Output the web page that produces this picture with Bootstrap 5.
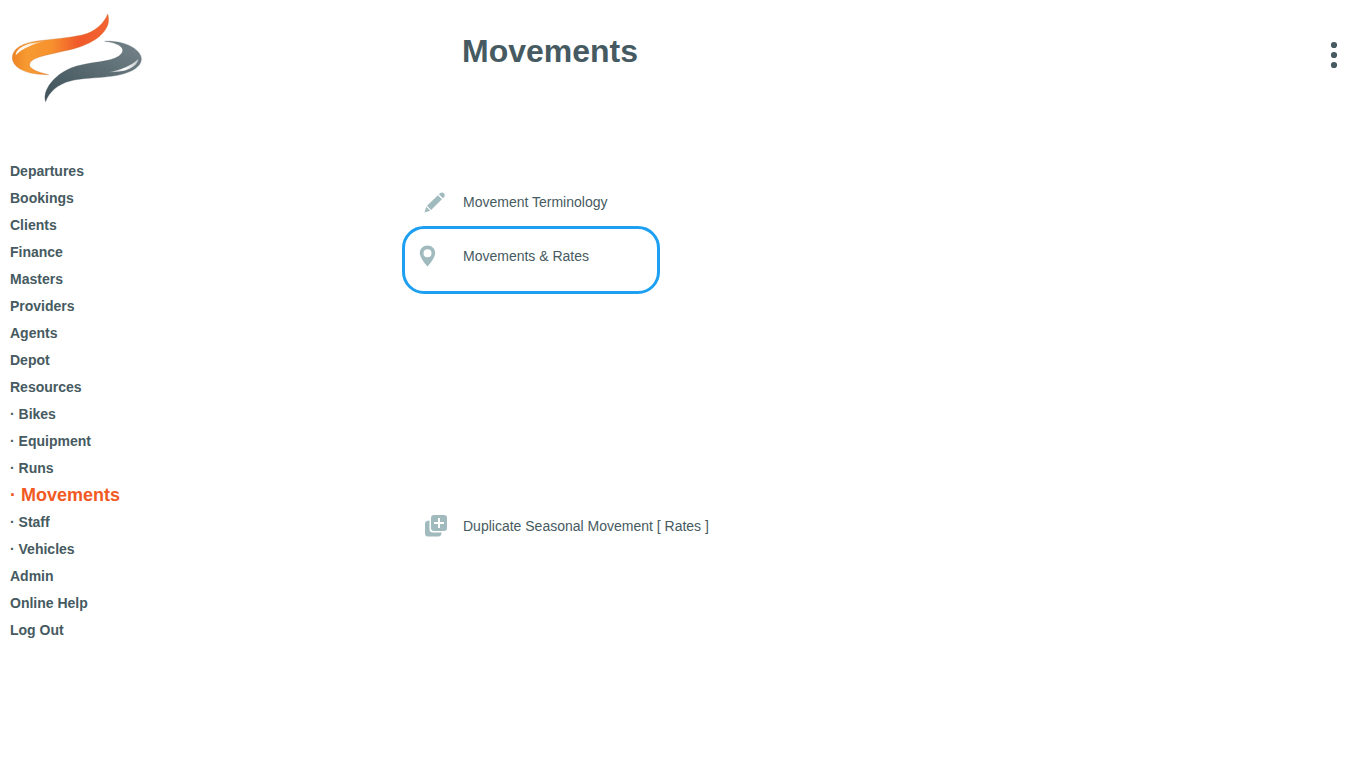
<!DOCTYPE html>
<html lang="en">
<head>
<meta charset="utf-8">
<meta name="viewport" content="width=device-width, initial-scale=1">
<title>Movements</title>
<link href="https://cdn.jsdelivr.net/npm/bootstrap@5.3.0/dist/css/bootstrap.min.css" rel="stylesheet">
<style>
  :root { --slate: #465a61; --accent: #f15a22; --icon: #a0babd; --focus: #1ea0f2; }
  body { font-family: "Liberation Sans", Arial, sans-serif; font-size: 14px; line-height: 27px; color: var(--slate); background: #fff; }
  a, .btn { color: var(--slate); text-decoration: none; }
  a:hover { color: var(--accent); }
  .split { display: grid; grid-template-columns: minmax(150px, 402px) 1fr; }
  .masthead { height: 158px; }
  .brand { display: block; width: 160px; height: 110px; }
  .page-title { font-size: 32px; line-height: 40px; font-weight: 700; padding: 31px 0 0 60px; }
  .more { padding: 38px 24px 0 0; line-height: 0; }
  .side { padding-left: 10px; font-weight: 700; }
  .side .current { color: var(--accent); font-size: 18px; }
  .tiles { padding-top: 17px; }
  .tile { display: grid; grid-template-columns: 21px 40px auto; align-items: center; height: 54px; width: 340px; }
  .tile svg { fill: var(--icon); }
  .tile.picked { grid-template-columns: 12px 46px auto; width: 258px; height: 68px; margin-top: -3px; padding-bottom: 8px; border: 3px solid var(--focus); border-radius: 22px; }
  .tile.last { margin-top: 205px; }
</style>
</head>
<body>
<header class="masthead split">
  <a href="#" class="brand" aria-label="Home">
    <svg width="160" height="110" viewBox="0 0 480 330" aria-hidden="true">
      <defs>
        <linearGradient id="warm" x1="0" x2="1"><stop offset="0" stop-color="#ee8322"/><stop offset=".15" stop-color="#f79a31"/><stop offset=".4" stop-color="#f7922f"/><stop offset=".68" stop-color="#f15a2b"/><stop offset="1" stop-color="#f2622f"/></linearGradient>
        <linearGradient id="cool" x1="0" y1="1" x2="1" y2="0"><stop offset="0" stop-color="#40535a"/><stop offset=".5" stop-color="#586970"/><stop offset="1" stop-color="#75848a"/></linearGradient>
        <linearGradient id="shine" x1="0" x2="1"><stop offset="0" stop-color="#fff"/><stop offset=".5" stop-color="#fff" stop-opacity=".85"/><stop offset="1" stop-color="#fff" stop-opacity="0"/></linearGradient>
        <linearGradient id="shine2" x1="1" x2="0"><stop offset="0" stop-color="#fff" stop-opacity=".6"/><stop offset=".5" stop-color="#fff"/><stop offset="1" stop-color="#fff" stop-opacity=".3"/></linearGradient>
      </defs>
      <path fill="url(#warm)" stroke="#c87732" stroke-width="1" d="M323 42C315 65 288 96 246 105C202 114 158 117 112 123C68 129 38 145 37 172C36 201 75 225 146 224C111 216 82 205 90 189C99 168 165 161 222 146C275 132 318 103 325 68C327 57 325 49 323 42Z"/>
      <path fill="url(#shine)" d="M47 166C50 144 77 128 138 124C99 132 67 145 47 166Z"/>
      <path fill="url(#cool)" stroke="#526268" stroke-width="1" d="M314 124C370 120 425 147 424 178C422 212 365 227 314 231C267 235 242 235 211 243C174 252 147 276 137 305C126 271 162 225 213 204C257 187 309 188 344 175C386 157 372 130 314 124Z"/>
      <path fill="url(#shine2)" d="M415 177C412 200 382 217 326 217C366 209 392 198 415 177Z"/>
    </svg>
  </a>
  <div class="d-flex justify-content-between align-items-start">
    <h1 class="page-title m-0">Movements</h1>
    <button type="button" class="more border-0 bg-transparent" aria-label="More options">
      <svg width="12" height="34" viewBox="0 0 12 34" fill="#465a61" aria-hidden="true"><circle cx="6" cy="7" r="3.1"/><circle cx="6" cy="17" r="3.1"/><circle cx="6" cy="27" r="3.1"/></svg>
    </button>
  </div>
</header>
<div class="split">
  <nav class="side" aria-label="Main">
    <ul class="list-unstyled m-0">
      <li><a href="#">Departures</a></li>
      <li><a href="#">Bookings</a></li>
      <li><a href="#">Clients</a></li>
      <li><a href="#">Finance</a></li>
      <li><a href="#">Masters</a></li>
      <li><a href="#">Providers</a></li>
      <li><a href="#">Agents</a></li>
      <li><a href="#">Depot</a></li>
      <li><a href="#">Resources</a></li>
      <li><a href="#">· Bikes</a></li>
      <li><a href="#">· Equipment</a></li>
      <li><a href="#">· Runs</a></li>
      <li class="current"><a href="#" class="current" aria-current="page">· Movements</a></li>
      <li><a href="#">· Staff</a></li>
      <li><a href="#">· Vehicles</a></li>
      <li><a href="#">Admin</a></li>
      <li><a href="#">Online Help</a></li>
      <li><a href="#">Log Out</a></li>
    </ul>
  </nav>
  <main class="tiles">
    <a href="#" class="tile"><span></span>
      <svg width="24" height="24" viewBox="0 0 24 24" aria-hidden="true"><path d="M1.500 22.500L3.200 16.800L7.200 20.700ZM4 15.700L14.900 5.200L18.900 9.200L8.100 19.900ZM15.900 4.300L17.300 3Q19.300 1.700 21 3.200Q22.500 5 21.300 6.900L19.900 8.200Z"/></svg>
      <span>Movement Terminology</span></a>
    <a href="#" class="tile picked"><span></span>
      <svg width="24" height="24" viewBox="0 0 24 24" aria-hidden="true"><path fill-rule="evenodd" d="M10.500 1.500C6.100 1.500 2.800 4.700 2.800 9C2.800 14.200 10.500 22.500 10.500 22.500S18.200 14.200 18.200 9C18.200 4.700 14.900 1.500 10.500 1.500ZM10.500 5.300A4 4 0 1 1 10.500 13.300A4 4 0 1 1 10.500 5.300Z"/></svg>
      <span>Movements &amp; Rates</span></a>
    <a href="#" class="tile last"><span></span>
      <svg width="26" height="24" viewBox="0 0 26 24" aria-hidden="true"><path fill-rule="evenodd" d="M10 1H21Q24 1 24 4V14Q24 17 21 17H11Q8 17 8 14V4Q8 1 11 1ZM15 4V8H11V10H15V14H17V10H21V8H17V4Z"/><path d="M6.500 6.500V15Q6.500 18.500 10 18.500H18.500V19.500Q18 22.500 15.500 22.500H5Q2 22.500 2 19.500V9Q2.500 6.500 6.500 6.500Z"/></svg>
      <span>Duplicate Seasonal Movement [ Rates ]</span></a>
  </main>
</div>
<script src="https://cdn.jsdelivr.net/npm/bootstrap@5.3.0/dist/js/bootstrap.bundle.min.js"></script>
</body>
</html>
